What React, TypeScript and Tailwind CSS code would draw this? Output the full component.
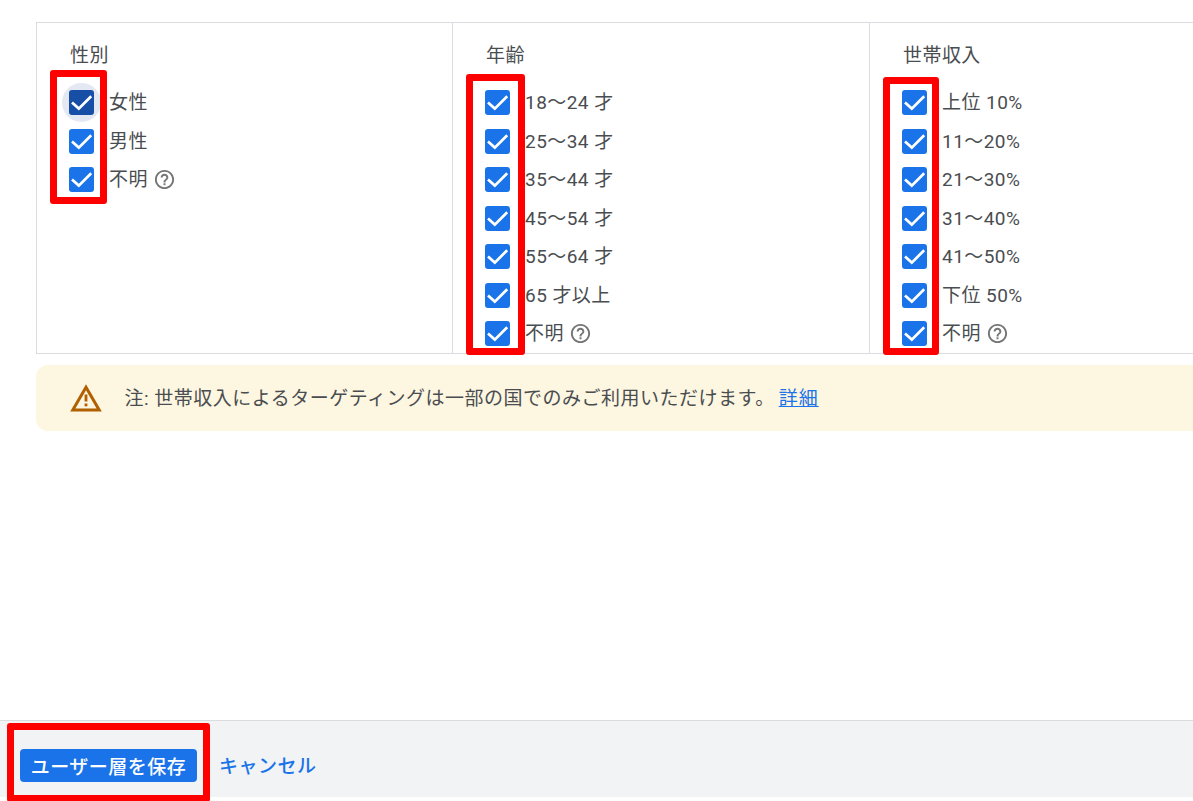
const font = { fontFamily: '"Roboto","Noto Sans CJK JP",sans-serif' };

function Check({ dark }: { dark?: boolean }) {
  return (
    <div className="relative w-[25px] h-[25px] shrink-0">
      {dark && <div className="absolute -left-[7px] -top-[7px] w-[39px] h-[39px] rounded-full bg-[#e3e8f3]" />}
      <div className={`absolute inset-0 rounded-[3px] ${dark ? "bg-[#174ea6]" : "bg-[#1a73e8]"}`}>
        <svg width="25" height="25" viewBox="0 0 25 25" fill="none">
          <path d="M3 12.4 L9.8 18.6 L22.2 6.2" stroke="#fff" strokeWidth="2.7" />
        </svg>
      </div>
    </div>
  );
}

function Help() {
  return (
    <svg width="23" height="23" viewBox="0 0 24 24" fill="#757575" className="ml-[2px]">
      <path d="M12 2C6.48 2 2 6.48 2 12s4.48 10 10 10 10-4.48 10-10S17.52 2 12 2zm0 18c-4.41 0-8-3.59-8-8s3.59-8 8-8 8 3.59 8 8-3.59 8-8 8z" />
      <path d="M11 16h2v2h-2zM12 6c-2.21 0-4 1.79-4 4h2c0-1.1.9-2 2-2s2 .9 2 2c0 2-3 1.75-3 5h2c0-2.25 3-2.5 3-5 0-2.21-1.79-4-4-4z" />
    </svg>
  );
}

function Row({ label, help, dark }: { label: string; help?: boolean; dark?: boolean }) {
  return (
    <div className="h-[38.5px] flex items-center gap-[3px]">
      <div className="w-[25px] mr-[12px] shrink-0"><Check dark={dark} /></div>
      <span className="text-[19px] tracking-[0.45px] text-[#4a4d50] leading-none">{label}</span>
      {help && <Help />}
    </div>
  );
}

function Column({ title, rows, left, width, box }: { title: string; rows: string[]; left: number; width: string; box: string }) {
  return (
    <div className={`relative shrink-0 ${width} ${left ? "border-l border-[#dadce0]" : ""}`}>
      <div className="pt-[19px] pl-[34px] h-[60.4px] text-[19px] tracking-[0.45px] text-[#4a4d50] leading-[28px] -ml-px">{title}</div>
      <div className="pl-[32px]">
        {rows.map((r, i) => (
          <Row key={r} label={r} help={r === "不明"} dark={title === "性別" && i === 0} />
        ))}
      </div>
      <div className={`absolute border-[7px] border-[#ff0000] rounded-[3px] ${box}`} />
    </div>
  );
}

export default function App() {
  return (
    <div className="w-[1193px] h-[801px] overflow-hidden bg-white flex flex-col" style={font}>
      <div className="flex-1 pt-[22px] pl-[36px]">
        <div className="flex h-[332px] w-[1157px] border border-r-0 border-[#dadce0]">
          <Column title="性別" left={0} width="w-[415px]" rows={["女性", "男性", "不明"]} box="left-[13px] top-[47px] w-[57px] h-[134px]" />
          <Column title="年齢" left={1} width="w-[417px]" rows={["18〜24 才", "25〜34 才", "35〜44 才", "45〜54 才", "55〜64 才", "65 才以上", "不明"]} box="left-[13px] top-[51px] w-[59px] h-[281px]" />
          <Column title="世帯収入" left={1} width="w-[325px]" rows={["上位 10%", "11〜20%", "21〜30%", "31〜40%", "41〜50%", "下位 50%", "不明"]} box="left-[13px] top-[54px] w-[56px] h-[278px]" />
        </div>
        <div className="mt-[11px] h-[66px] w-[1157px] bg-[#fdf6e0] rounded-l-[12px] flex items-center pl-[34px]">
          <svg width="32" height="28" viewBox="0 0 32 28" fill="none" className="shrink-0">
            <path d="M16 3.2 L29.2 26 H2.8 Z" stroke="#b06000" strokeWidth="3" />
            <rect x="14.6" y="10.5" width="2.8" height="7" fill="#b06000" />
            <rect x="14.6" y="19.5" width="2.8" height="2.8" fill="#b06000" />
          </svg>
          <span className="ml-[22.5px] text-[19px] tracking-[0.5px] text-[#4a4d50] leading-none whitespace-nowrap">注: 世帯収入によるターゲティングは一部の国でのみご利用いただけます。</span>
          <a className="ml-[4px] text-[19px] tracking-[1px] text-[#1a73e8] underline leading-none">詳細</a>
        </div>
      </div>
      <div className="relative h-[77px] mb-[4px] bg-[#f1f3f4] border-t border-[#dadce0] flex items-start pt-[28px] pl-[20px]">
        <button className="h-[33px] w-[177px] pt-[3px] rounded-[4px] bg-[#1a73e8] text-white text-[19px] tracking-[0.5px] font-medium leading-none whitespace-nowrap">ユーザー層を保存</button>
        <a className="ml-[22px] h-[33px] pt-[3px] flex items-center text-[#1a73e8] text-[19px] tracking-[0.5px] font-medium whitespace-nowrap">キャンセル</a>
        <div className="absolute left-[7px] top-[2px] w-[203px] h-[79px] border-[7px] border-[#ff0000] rounded-[3px]" />
      </div>
    </div>
  );
}
